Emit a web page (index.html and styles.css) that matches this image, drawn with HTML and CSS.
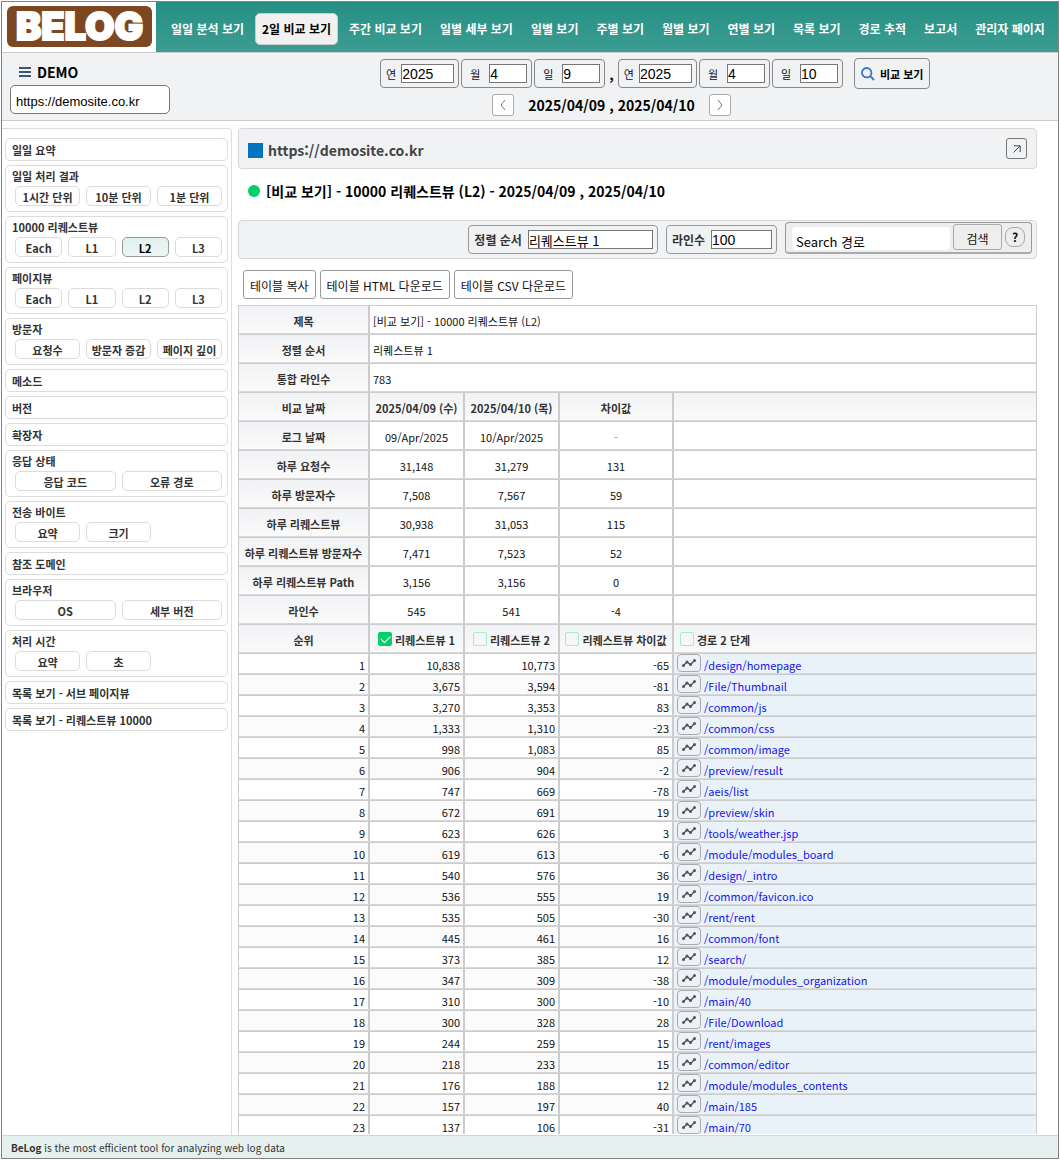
FILE: index.html
```
<!DOCTYPE html>
<html lang="ko">
<head>
    <meta charset="UTF-8">
    <meta name="viewport" content="width=device-width, initial-scale=1.0">
    <title>BeLog - 2일 비교 보기</title>
    <link rel="stylesheet" href="styles.css">
</head>
<body>
    <div class="app">
        <header class="header">
            <a href="#" class="logo"><span class="logo-mark">BELOG</span></a>
            <nav class="menu">
                <a href="#">일일 분석 보기</a>
                <a href="#" class="active">2일 비교 보기</a>
                <a href="#">주간 비교 보기</a>
                <a href="#">일별 세부 보기</a>
                <a href="#">일별 보기</a>
                <a href="#">주별 보기</a>
                <a href="#">월별 보기</a>
                <a href="#">연별 보기</a>
                <a href="#">목록 보기</a>
                <a href="#">경로 추적</a>
                <a href="#">보고서</a>
                <a href="#">관리자 페이지</a>
            </nav>
        </header>

        <div class="toolbar">
            <div class="site">
                <label class="site-name" for="site">
                    <svg class="icon-menu" viewBox="0 0 12 10"><path d="M0 1H12M0 5H12M0 9H12" /></svg>
                    DEMO
                </label>
                <input type="text" id="site" class="site-input" value="https://demosite.co.kr">
            </div>
            <div class="period">
                <div class="date-row">
                    <div class="dates">
                        <label class="field">연 <input type="text" class="year" value="2025"></label>
                        <label class="field short">월 <input type="text" value="4"></label>
                        <label class="field short">일 <input type="text" value="9"></label>
                        <span class="comma">,</span>
                        <label class="field">연 <input type="text" class="year" value="2025"></label>
                        <label class="field short">월 <input type="text" value="4"></label>
                        <label class="field short">일 <input type="text" value="10"></label>
                    </div>
                    <button class="compare-btn">
                        <svg viewBox="0 0 14 14"><circle cx="5.7" cy="5.7" r="4.7" /><path d="M9.2 9.2L13 13" /></svg>
                        비교 보기
                    </button>
                </div>
                <div class="range-row">
                    <button class="arrow-btn" aria-label="이전"><svg viewBox="0 0 6 12"><path d="M5 1L1 6L5 11" /></svg></button>
                    <strong>2025/04/09 , 2025/04/10</strong>
                    <button class="arrow-btn" aria-label="다음"><svg viewBox="0 0 6 12"><path d="M1 1L5 6L1 11" /></svg></button>
                </div>
            </div>
        </div>

        <div class="body">
            <aside class="sidebar">
                <a href="#" class="box">일일 요약</a>
                <div class="box">일일 처리 결과
                    <div class="sub cols-3">
                        <button>1시간 단위</button><button>10분 단위</button><button>1분 단위</button>
                    </div>
                </div>
                <div class="box">10000 리퀘스트뷰
                    <div class="sub cols-4">
                        <button>Each</button><button>L1</button><button class="active">L2</button><button>L3</button>
                    </div>
                </div>
                <div class="box">페이지뷰
                    <div class="sub cols-4">
                        <button>Each</button><button>L1</button><button>L2</button><button>L3</button>
                    </div>
                </div>
                <div class="box">방문자
                    <div class="sub cols-3">
                        <button>요청수</button><button>방문자 증감</button><button>페이지 깊이</button>
                    </div>
                </div>
                <a href="#" class="box">메소드</a>
                <a href="#" class="box">버전</a>
                <a href="#" class="box">확장자</a>
                <div class="box">응답 상태
                    <div class="sub cols-2">
                        <button>응답 코드</button><button>오류 경로</button>
                    </div>
                </div>
                <div class="box">전송 바이트
                    <div class="sub cols-3">
                        <button>요약</button><button>크기</button>
                    </div>
                </div>
                <a href="#" class="box">참조 도메인</a>
                <div class="box">브라우저
                    <div class="sub cols-2">
                        <button>OS</button><button>세부 버전</button>
                    </div>
                </div>
                <div class="box">처리 시간
                    <div class="sub cols-3">
                        <button>요약</button><button>초</button>
                    </div>
                </div>
                <a href="#" class="box">목록 보기 - 서브 페이지뷰</a>
                <a href="#" class="box">목록 보기 - 리퀘스트뷰 10000</a>
            </aside>

            <main class="content">
                <div class="url-bar">
                    <span class="square"></span>
                    <strong>https://demosite.co.kr</strong>
                    <button class="open-btn" aria-label="새 창">
                        <svg viewBox="0 0 8 8"><path d="M0.5 7.5L7 1M1 0.8H7.2V7" /></svg>
                    </button>
                </div>

                <h1 class="title"><span class="dot"></span>[비교 보기] - 10000 리퀘스트뷰 (L2) - 2025/04/09 , 2025/04/10</h1>

                <div class="filter-bar">
                    <label class="field bold">정렬 순서 <input type="text" class="sort" value="리퀘스트뷰 1"></label>
                    <label class="field bold">라인수 <input type="text" class="lines" value="100"></label>
                    <div class="search">
                        <input type="text" placeholder="Search 경로" aria-label="Search 경로">
                        <button class="search-btn">검색</button>
                        <button class="help-btn">?</button>
                    </div>
                </div>

                <div class="table-actions">
                    <button>테이블 복사</button>
                    <button>테이블 HTML 다운로드</button>
                    <button>테이블 CSV 다운로드</button>
                </div>

                <table class="report">
                    <colgroup>
                        <col class="col-rank"><col class="col-day"><col class="col-day"><col class="col-diff"><col>
                    </colgroup>
                    <tbody class="summary">
                        <tr><th>제목</th><td colspan="4" class="left">[비교 보기] - 10000 리퀘스트뷰 (L2)</td></tr>
                        <tr><th>정렬 순서</th><td colspan="4" class="left">리퀘스트뷰 1</td></tr>
                        <tr><th>통합 라인수</th><td colspan="4" class="left">783</td></tr>
                        <tr><th>비교 날짜</th><th>2025/04/09 (수)</th><th>2025/04/10 (목)</th><th>차이값</th><th></th></tr>
                        <tr><th>로그 날짜</th><td>09/Apr/2025</td><td>10/Apr/2025</td><td class="none">-</td><td></td></tr>
                        <tr><th>하루 요청수</th><td>31,148</td><td>31,279</td><td>131</td><td></td></tr>
                        <tr><th>하루 방문자수</th><td>7,508</td><td>7,567</td><td>59</td><td></td></tr>
                        <tr><th>하루 리퀘스트뷰</th><td>30,938</td><td>31,053</td><td>115</td><td></td></tr>
                        <tr><th>하루 리퀘스트뷰 방문자수</th><td>7,471</td><td>7,523</td><td>52</td><td></td></tr>
                        <tr><th>하루 리퀘스트뷰 Path</th><td>3,156</td><td>3,156</td><td>0</td><td></td></tr>
                        <tr><th>라인수</th><td>545</td><td>541</td><td>-4</td><td></td></tr>
                        <tr>
                            <th>순위</th>
                            <th><label class="check"><input type="checkbox" checked> 리퀘스트뷰 1</label></th>
                            <th><label class="check"><input type="checkbox"> 리퀘스트뷰 2</label></th>
                            <th><label class="check"><input type="checkbox"> 리퀘스트뷰 차이값</label></th>
                            <th class="left"><label class="check"><input type="checkbox"> 경로 2 단계</label></th>
                        </tr>
                    </tbody>
                    <tbody class="rows" id="rows"></tbody>
                </table>
            </main>
        </div>

        <footer class="footer"><strong>BeLog</strong> is the most efficient tool for analyzing web log data</footer>
    </div>

    <script src="script.js"></script>
</body>
</html>
```
FILE: styles.css
```
* {
    box-sizing: border-box;
}
body {
    margin: 0;
    padding: 1px;
    font-family: "Noto Sans CJK KR", sans-serif;
    font-size: 11px;
    color: #111;
    background: #fff;
}
button, input {
    font-family: inherit;
    color: inherit;
    margin: 0;
}
button {
    cursor: pointer;
}
a {
    text-decoration: none;
}
.app {
    display: flex;
    flex-direction: column;
    height: calc(100vh - 2px);
    border: 1px solid #808080;
}

/* 상단 메뉴 */
.header {
    display: flex;
    flex-shrink: 0;
    height: 51px;
    border-bottom: 1px solid #ccc;
}
.logo {
    flex-shrink: 0;
    padding: 4px 4px 4px 5px;
    background: #fff;
}
.logo-mark {
    display: flex;
    align-items: center;
    justify-content: center;
    width: 145px;
    height: 41px;
    border-radius: 6px;
    background: #7d4821;
    color: #fff;
    font-family: Inter, sans-serif;
    font-size: 38px;
    font-weight: 900;
    line-height: 41px;
    -webkit-text-stroke: 2px #fff;
}
.menu {
    flex: 1;
    display: flex;
    align-items: center;
    justify-content: space-between;
    padding: 4px 6px 0 8px;
    background: linear-gradient(#268f84, #3c9d91);
}
.menu a {
    padding: 0 6px;
    border: 1px solid transparent;
    border-radius: 5px;
    line-height: 30px;
    font-size: 12px;
    font-weight: 700;
    color: #fff;
    white-space: nowrap;
}
.menu a.active {
    background: #f1f1f1;
    border-color: #ccc;
    color: #000;
}

/* 날짜 선택 */
.toolbar {
    display: flex;
    flex-shrink: 0;
    height: 68px;
    padding: 5px 5px 5px 8px;
    background: #f1f2f4;
    border-bottom: 1px solid #ccc;
}
.site {
    flex: 0 0 160px;
}
.site-name {
    display: flex;
    align-items: center;
    gap: 6px;
    height: 27px;
    padding-left: 9px;
    font-size: 14px;
    font-weight: 700;
    color: #000;
}
.icon-menu {
    width: 12px;
    height: 10px;
    stroke: #3b567c;
    stroke-width: 2;
}
.site-input {
    width: 100%;
    height: 29px;
    padding: 3px 5px 0;
    border: 1px solid #767676;
    border-radius: 5px;
    background: #fff;
    font-family: "Liberation Sans", sans-serif;
    font-size: 13px;
    color: #000;
}
.period {
    flex: 1;
}
.date-row {
    display: grid;
    grid-template-columns: 1fr auto 1fr;
    align-items: center;
}
.dates {
    grid-column: 2;
    display: flex;
    align-items: center;
    gap: 2px;
}
.comma {
    padding: 0 2px;
    font-size: 14px;
    font-weight: 700;
}
.field {
    display: flex;
    align-items: center;
    justify-content: space-between;
    gap: 5px;
    height: 29px;
    padding: 0 4px 0 5px;
    border: 1px solid #888;
    border-radius: 4px;
    white-space: nowrap;
}
.field.short {
    width: 71px;
    padding-left: 8px;
}
.field.bold {
    gap: 6px;
    border-color: #999;
    font-size: 12px;
    font-weight: 700;
    color: #333;
}
.field input {
    width: 38px;
    height: 19px;
    padding: 1px 0 0;
    border: 1px solid #767676;
    border-radius: 0;
    background: #fff;
    font-family: "Liberation Sans", "Noto Sans CJK KR", sans-serif;
    font-size: 14px;
    color: #000;
}
.field input.year {
    width: 53px;
}
.field input.sort {
    width: 125px;
    font-family: inherit;
    font-size: 13px;
}
.field input.lines {
    width: 61px;
}
.compare-btn {
    justify-self: start;
    display: flex;
    align-items: center;
    gap: 5px;
    height: 31px;
    margin-left: 11px;
    padding: 0 6px;
    border: 1px solid #888;
    border-radius: 4px;
    background: #f1f2f4;
    font-size: 11px;
    font-weight: 700;
    color: #000;
}
.compare-btn svg {
    width: 14px;
    height: 14px;
    fill: none;
    stroke: #3878c7;
    stroke-width: 1.8;
}
.range-row {
    display: flex;
    align-items: center;
    justify-content: center;
    gap: 14px;
    padding-top: 5px;
    font-size: 14px;
    line-height: 22px;
    color: #000;
}
.arrow-btn {
    display: flex;
    align-items: center;
    justify-content: center;
    width: 22px;
    height: 22px;
    padding: 0;
    border: 1px solid #aaa;
    border-radius: 3px;
    background: #fff;
}
.arrow-btn svg {
    width: 6px;
    height: 12px;
    fill: none;
    stroke: #777;
}

/* 왼쪽 메뉴 */
.body {
    flex: 1;
    display: flex;
    min-height: 0;
    padding-top: 7px;
}
.sidebar {
    display: flex;
    flex-direction: column;
    flex: 0 0 230px;
    gap: 4px;
    padding: 9px 3px 0;
    border-top: 1px solid #ddd;
    border-right: 1px solid #ddd;
    border-top-right-radius: 4px;
}
.box {
    padding: 1px 5px 5px 6px;
    border: 1px solid #dcdcdc;
    border-radius: 5px;
    line-height: 18px;
    font-weight: 700;
    color: #333;
}
a.box {
    padding: 2px 6px 1px;
}
.sub {
    display: grid;
    gap: 6px;
    padding: 1px 0 0 3px;
}
.cols-2 {
    grid-template-columns: repeat(2, 1fr);
}
.cols-3 {
    grid-template-columns: repeat(3, 1fr);
}
.cols-4 {
    grid-template-columns: repeat(4, 1fr);
}
.sub button {
    height: 20px;
    padding: 2px 0 0;
    border: 1px solid #dcdcdc;
    border-radius: 5px;
    background: #fff;
    font-size: 11px;
    font-weight: 700;
    line-height: 16px;
    white-space: nowrap;
}
.sub button.active {
    border-color: #999;
    background: linear-gradient(#e2f1ee, #eef7f5);
    color: #000;
}

/* 본문 */
.content {
    flex: 1;
    min-width: 0;
    margin-bottom: 1px;
    padding: 0 21px 0 6px;
    overflow-y: auto;
    scrollbar-width: none;
}
.url-bar {
    display: flex;
    align-items: center;
    gap: 5px;
    height: 41px;
    padding: 0 9px;
    border: 1px solid #ddd6d8;
    border-radius: 4px;
    background: #f1f2f4;
    font-size: 14px;
    color: #444;
}
.url-bar strong {
    flex: 1;
    padding-top: 2px;
}
.square {
    width: 15px;
    height: 15px;
    margin-top: 3px;
    background: #0074c0;
}
.open-btn {
    display: flex;
    align-items: center;
    justify-content: center;
    width: 21px;
    height: 21px;
    padding: 0;
    border: 1px solid #777;
    border-radius: 3px;
    background: none;
}
.open-btn svg {
    width: 8px;
    height: 8px;
    fill: none;
    stroke: #445;
}
.title {
    display: flex;
    align-items: center;
    gap: 6px;
    height: 51px;
    margin: 0;
    padding: 0 10px 8px;
    font-size: 14px;
    font-weight: 700;
    color: #000;
    white-space: nowrap;
}
.dot {
    width: 12px;
    height: 12px;
    border-radius: 50%;
    background: #00d068;
}
.filter-bar {
    display: flex;
    align-items: center;
    justify-content: flex-end;
    gap: 8px;
    height: 39px;
    padding: 0 4px;
    border: 1px solid #ddd6d8;
    border-radius: 4px;
    background: #f1f2f4;
}
.search {
    display: flex;
    align-items: center;
    gap: 3px;
    height: 32px;
    margin-bottom: 4px;
    padding: 0 6px;
    border: 1px solid #999;
    border-bottom: 2px solid #aaa;
    border-radius: 4px;
    background: #eee;
}
.search input {
    width: 158px;
    height: 23px;
    margin-top: 2px;
    padding: 6px 4px 0;
    border: none;
    border-radius: 4px;
    background: #fff;
    font-size: 13px;
}
.search input::placeholder {
    color: #000;
}
.search-btn {
    width: 49px;
    height: 26px;
    padding: 2px 0 0;
    border: 1px solid #aaa;
    border-radius: 3px;
    background: #eee;
    font-size: 12px;
}
.help-btn {
    width: 20px;
    height: 20px;
    padding: 0;
    border: 1px solid #aaa;
    border-radius: 8px;
    background: #eee;
    font-size: 12px;
    font-weight: 700;
    line-height: 18px;
}
.table-actions {
    display: flex;
    gap: 4px;
    padding: 11px 5px 6px;
}
.table-actions button {
    height: 29px;
    padding: 2px 6px 0;
    border: 1px solid #999;
    border-radius: 3px;
    background: #fff;
    font-size: 12px;
}

/* 표 */
.report {
    width: 100%;
    table-layout: fixed;
    border-collapse: separate;
    border-spacing: 0;
    border: none;
}
.col-rank {
    width: 131px;
}
.col-day {
    width: 95px;
}
.col-diff {
    width: 114px;
}
.report th, .report td {
    padding: 3px 3px 0;
    border: 1px solid #ccc;
    border-bottom-color: #d8d8d8;
    white-space: nowrap;
}
.summary th, .summary td {
    height: 29px;
    text-align: center;
}
.report th {
    background: linear-gradient(#f1f2f5, #fafafa);
    color: #333;
}
.report .left {
    text-align: left;
}
.report .none {
    color: #888;
}
.check {
    display: inline-flex;
    align-items: center;
    gap: 3px;
}
.left .check {
    padding-left: 3px;
}
.check input {
    appearance: none;
    width: 14px;
    height: 14px;
    margin: 0 0 2px;
    border: 1px solid #a5ecc8;
    border-radius: 2px;
}
.check input:checked {
    position: relative;
    border-color: #00d068;
    background: #00d068;
}
.check input:checked::after {
    content: "";
    position: absolute;
    left: 2px;
    top: 2px;
    width: 8px;
    height: 5px;
    border-left: 1px solid #fff;
    border-bottom: 1px solid #fff;
    transform: rotate(-45deg);
}
.rows td {
    height: 21px;
    padding-top: 3px;
    line-height: 16px;
    text-align: right;
}
.rows tr:nth-child(even) td {
    background: #fbfbfb;
}
.rows td.path, .rows tr:nth-child(even) td.path {
    padding-top: 0;
    background: #eaf2f9;
    text-align: left;
}
.path-cell {
    display: flex;
    gap: 3px;
    height: 19px;
}
.path-cell a {
    padding-top: 3px;
    color: #1414f0;
}
.chart-btn {
    display: flex;
    align-items: center;
    justify-content: center;
    width: 24px;
    height: 18px;
    padding: 0;
    border: 1px solid #aaa;
    border-radius: 4px;
    background: #eef2f6;
}
.chart-btn svg {
    width: 14px;
    height: 8px;
    fill: #555;
    stroke: #555;
    stroke-width: 1.4;
}
.chart-btn path {
    fill: none;
}

.footer {
    flex-shrink: 0;
    height: 23px;
    padding: 2px 9px 0;
    border-top: 1px solid #ccdad7;
    background: #e6f1ef;
    font-size: 10px;
    line-height: 20px;
    color: #333;
}
```
FILE: script.js
```
// [리퀘스트뷰 1, 리퀘스트뷰 2, 차이값, 경로]
const rows = [
    ["10,838", "10,773", "-65", "/design/homepage"],
    ["3,675", "3,594", "-81", "/File/Thumbnail"],
    ["3,270", "3,353", "83", "/common/js"],
    ["1,333", "1,310", "-23", "/common/css"],
    ["998", "1,083", "85", "/common/image"],
    ["906", "904", "-2", "/preview/result"],
    ["747", "669", "-78", "/aeis/list"],
    ["672", "691", "19", "/preview/skin"],
    ["623", "626", "3", "/tools/weather.jsp"],
    ["619", "613", "-6", "/module/modules_board"],
    ["540", "576", "36", "/design/_intro"],
    ["536", "555", "19", "/common/favicon.ico"],
    ["535", "505", "-30", "/rent/rent"],
    ["445", "461", "16", "/common/font"],
    ["373", "385", "12", "/search/"],
    ["347", "309", "-38", "/module/modules_organization"],
    ["310", "300", "-10", "/main/40"],
    ["300", "328", "28", "/File/Download"],
    ["244", "259", "15", "/rent/images"],
    ["218", "233", "15", "/common/editor"],
    ["176", "188", "12", "/module/modules_contents"],
    ["157", "197", "40", "/main/185"],
    ["137", "106", "-31", "/main/70"]
];

const chartIcon = `<svg viewBox="0 0 14 8"><path d="M1.5 6.5L5 3L8.5 5.5L12.5 1.5" /><circle cx="1.5" cy="6.5" r="0.8" /><circle cx="5" cy="3" r="0.8" /><circle cx="8.5" cy="5.5" r="0.8" /><circle cx="12.5" cy="1.5" r="0.8" /></svg>`;

document.getElementById('rows').innerHTML = rows.map((row, index) => `
    <tr>
        <td>${index + 1}</td>
        <td>${row[0]}</td>
        <td>${row[1]}</td>
        <td>${row[2]}</td>
        <td class="path">
            <div class="path-cell">
                <button class="chart-btn" aria-label="추이">${chartIcon}</button>
                <a href="#">${row[3]}</a>
            </div>
        </td>
    </tr>
`).join('');
```
